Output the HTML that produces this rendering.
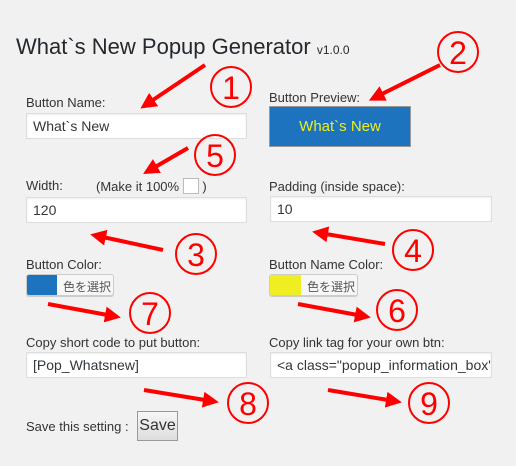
<!DOCTYPE html>
<html><head><meta charset="utf-8"><style>
body{margin:0;width:516px;height:466px;background:#f1f1f1;font-family:"Liberation Sans","Noto Sans CJK JP",sans-serif;color:#444;position:relative;overflow:hidden}
.a{position:absolute;white-space:nowrap}
.l{font-size:13px;color:#333}
.in{position:absolute;background:#fff;border:1px solid #ddd;box-shadow:inset 0 1px 2px rgba(0,0,0,.07);box-sizing:border-box;height:26px;font-size:14px;color:#32373c;padding:4px 6px;white-space:nowrap;overflow:hidden}
.cp{position:absolute;height:22px;border:1px solid #ccc;border-radius:3px;background:#f7f7f7;box-sizing:border-box;box-shadow:0 1px 0 #ccc;font-size:12px;color:#555;overflow:hidden}
.cp span{display:inline-block;height:100%;vertical-align:top}
</style></head><body>
<div class="a" style="left:16px;top:34px;font-size:22px;color:#23282d">What`s New Popup Generator <span style="font-size:12px">v1.0.0</span></div>

<div class="a l" style="left:26px;top:95px">Button Name:</div>
<div class="in" style="left:26px;top:113px;width:221px">What`s New</div>
<div class="a l" style="left:26px;top:178px">Width:</div>
<div class="a l" style="left:96px;top:178px">(Make it 100% <span style="display:inline-block;width:14px;height:14px;border:1px solid #bbb;background:#fff;vertical-align:-3px"></span> )</div>
<div class="in" style="left:26px;top:197px;width:221px">120</div>
<div class="a l" style="left:26px;top:257px">Button Color:</div>
<div class="cp" style="left:26px;top:274px;width:88px"><span style="width:30px;background:#1e73be"></span><span style="padding:3px 0 0 6px">色を選択</span></div>
<div class="a l" style="left:26px;top:335px">Copy short code to put button:</div>
<div class="in" style="left:26px;top:352px;width:221px">[Pop_Whatsnew]</div>
<div class="a l" style="left:26px;top:419px">Save this setting :</div>
<div class="a" style="left:137px;top:411px;width:41px;height:30px;border:1px solid #999;background:linear-gradient(#f6f6f6,#ddd);box-sizing:border-box;font-size:16px;color:#333;text-align:center;line-height:28px">Save</div>

<div class="a l" style="left:269px;top:90px">Button Preview:</div>
<div class="a" style="left:269px;top:106px;width:142px;height:41px;background:#1e73be;border:1px solid #999;box-sizing:border-box;color:#eeee22;font-size:15px;text-align:center;line-height:39px">What`s New</div>
<div class="a l" style="left:269px;top:179px">Padding (inside space):</div>
<div class="in" style="left:270px;top:196px;width:222px">10</div>
<div class="a l" style="left:269px;top:257px">Button Name Color:</div>
<div class="cp" style="left:269px;top:274px;width:89px"><span style="width:31px;background:#eeee22"></span><span style="padding:3px 0 0 6px">色を選択</span></div>
<div class="a l" style="left:269px;top:335px">Copy link tag for your own btn:</div>
<div class="in" style="left:270px;top:352px;width:222px">&lt;a class="popup_information_box"&gt;</div>

<svg width="516" height="466" style="position:absolute;left:0;top:0">
<defs><marker id="m" markerWidth="4" markerHeight="4" refX="2" refY="2" orient="auto" markerUnits="strokeWidth"><path d="M0,0L4,2L0,4Z" fill="#f00"/></marker></defs>
<g stroke="#f00" stroke-width="4" marker-end="url(#m)">
<line x1="205" y1="65" x2="147" y2="104"/>
<line x1="440" y1="65" x2="376" y2="97"/>
<line x1="188" y1="148" x2="150" y2="170"/>
<line x1="163" y1="250" x2="98" y2="236"/>
<line x1="385" y1="244" x2="320" y2="233"/>
<line x1="48" y1="304" x2="113" y2="316"/>
<line x1="298" y1="304" x2="363" y2="316"/>
<line x1="144" y1="390" x2="211" y2="401"/>
<line x1="328" y1="390" x2="394" y2="401"/>
</g>
<g fill="none" stroke="#f00" stroke-width="2">
<circle cx="231" cy="87" r="20"/><circle cx="458" cy="52" r="20"/><circle cx="215" cy="155" r="20"/>
<circle cx="196" cy="254" r="20"/><circle cx="413" cy="250" r="20"/><circle cx="150" cy="313" r="20"/>
<circle cx="397" cy="310" r="20"/><circle cx="248" cy="403" r="20"/><circle cx="429" cy="403" r="20"/>
</g>
<g fill="#f00" font-family="Liberation Sans,sans-serif" font-size="32" text-anchor="middle">
<text x="231" y="99">1</text><text x="458" y="64">2</text><text x="215" y="167">5</text>
<text x="196" y="266">3</text><text x="413" y="262">4</text><text x="150" y="325">7</text>
<text x="397" y="322">6</text><text x="248" y="415">8</text><text x="429" y="415">9</text>
</g>
</svg>
</body></html>
